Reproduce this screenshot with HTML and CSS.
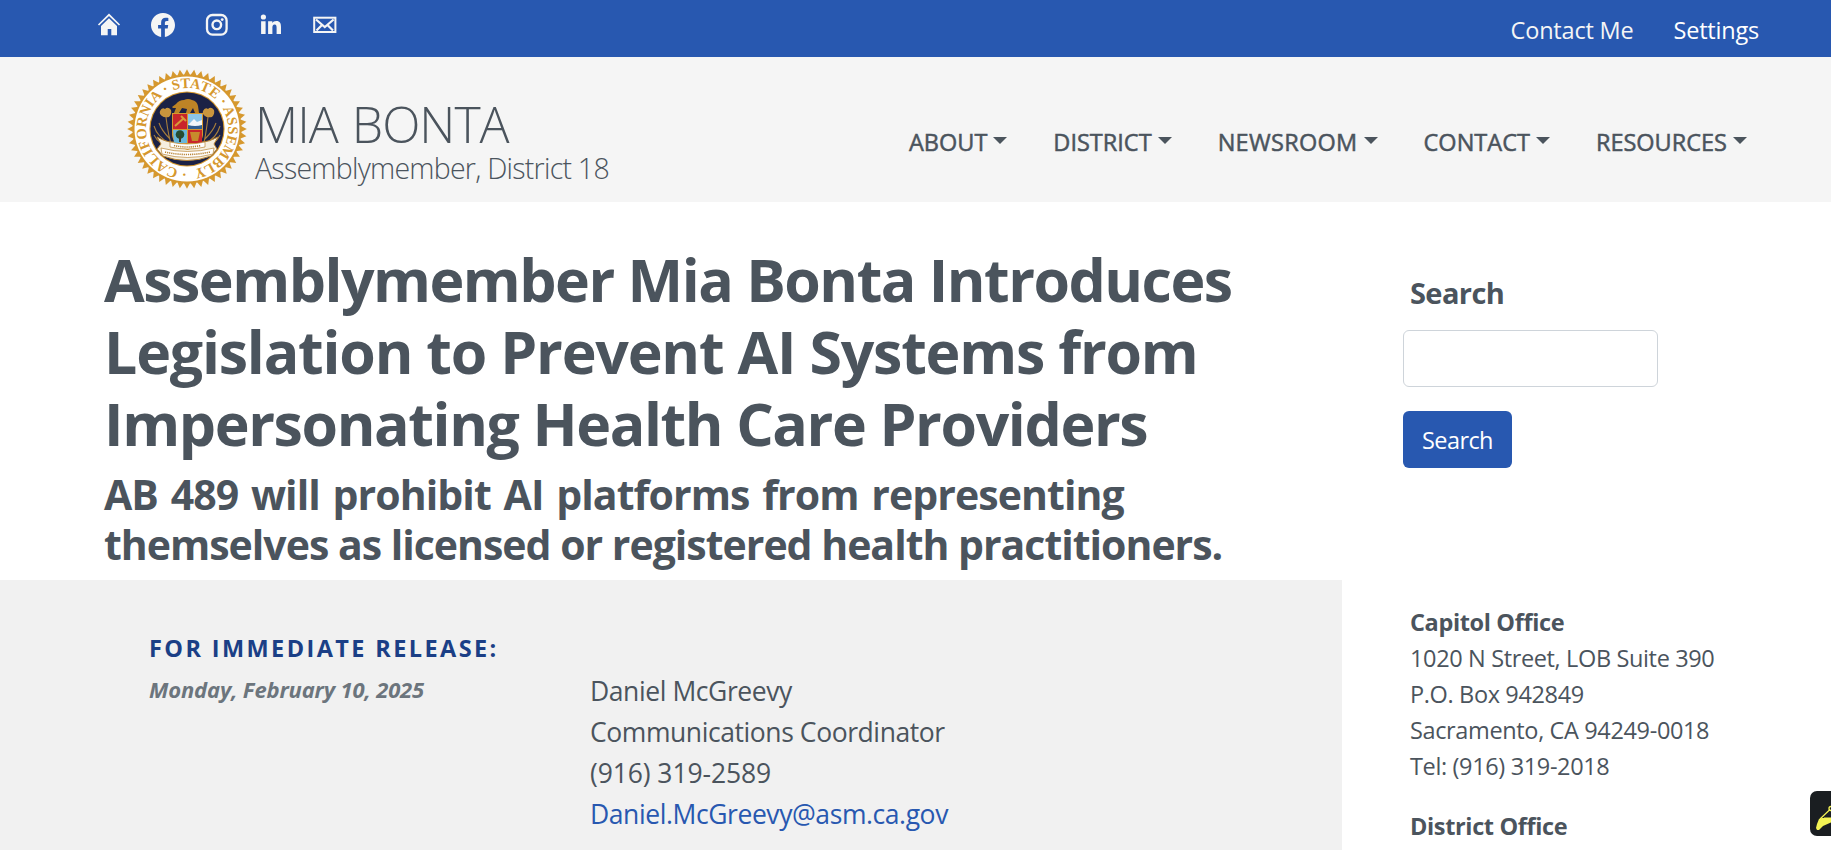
FILE: index.html
```
<!DOCTYPE html>
<html lang="en">
<head>
    <meta charset="UTF-8">
    <meta name="viewport" content="width=device-width, initial-scale=1.0">
    <title>Assemblymember Mia Bonta</title>
    <link rel="stylesheet" href="styles.css">
</head>
<body>
    <div class="topbar">
        <div class="social">
            <a href="#" aria-label="Home"><svg width="24" height="24" viewBox="0 0 24 24"><path d="M1.500 12 12 1.800 22.500 12" fill="none" stroke="#f5f5f5" stroke-width="1.700"/><path d="M4 13 12 5.300l8 7.700V22.300H14.300v-6.300h-3.600v6.300H4z" fill="#f5f5f5"/></svg></a>
            <a href="#" aria-label="Facebook"><svg width="24" height="24" viewBox="0 0 16 16" fill="#f5f5f5"><path d="M16 8.049c0-4.446-3.582-8.050-8-8.050C3.580 0-.002 3.603-.002 8.050c0 4.017 2.926 7.347 6.750 7.951v-5.625h-2.030V8.050H6.750V6.275c0-2.017 1.195-3.131 3.022-3.131.876 0 1.791.157 1.791.157v1.980h-1.009c-.993 0-1.303.621-1.303 1.258v1.510h2.218l-.354 2.326H9.250V16c3.824-.604 6.750-3.934 6.750-7.951"/></svg></a>
            <a href="#" aria-label="Instagram"><svg width="24" height="24" viewBox="0 0 24 24" fill="none" stroke="#f5f5f5"><rect x="2" y="2" width="19.600" height="19.600" rx="5.500" stroke-width="2.300"/><circle cx="11.800" cy="11.800" r="4.300" stroke-width="2.400"/><circle cx="17.200" cy="6.600" r="1.400" fill="#f5f5f5" stroke="none"/></svg></a>
            <a href="#" aria-label="LinkedIn"><svg width="24" height="24" viewBox="0 0 24 24" fill="#f5f5f5"><circle cx="4.400" cy="4" r="2.600"/><path d="M2.100 8.300h4.500V21H2.100zM9.100 8.300h4.200v1.800c.700-1.200 2-2.100 4-2.100 3.800 0 4.700 2.500 4.700 5.900V21h-4.400v-6.300c0-1.700-.2-3.200-2-3.200-1.800 0-2.200 1.400-2.200 3.100V21H9.100z"/></svg></a>
            <a href="#" aria-label="Email"><svg width="24" height="24" viewBox="0 0 24 24" fill="none" stroke="#f5f5f5"><rect x="1.200" y="4.700" width="21.200" height="14.300" stroke-width="2"/><path d="M3 6.500l8.800 7.500 8.800-7.500M3.500 17.500l5.500-5.500M20 17.500l-5.500-5.500" stroke-width="2.200"/></svg></a>
        </div>
        <div class="toplinks">
            <a href="#">Contact Me</a>
            <a href="#">Settings</a>
        </div>
    </div>

    <header class="header">
        <a href="#" class="brand">
            <svg class="seal" width="122" height="122" viewBox="-61 -61 122 122">
                <defs>
                    <path id="ring" d="M0 41A41 41 0 1 1 .1 41"/>
                </defs>
                <g id="teeth"></g>
                <circle r="54.500" fill="#d6982e"/>
                <circle r="52.500" fill="#fff"/>
                <circle r="37.600" fill="#d6982e"/>
                <circle r="36.500" fill="#1b2145"/>
                <text class="seal-text"><textPath href="#ring" startOffset="0" textLength="250">· CALIFORNIA · STATE · ASSEMBLY</textPath></text>
                <g fill="none" stroke="#a87f3c" stroke-width="1.100">
                    <path d="M-15 18C-19 6-20-4-21-12M-17 10C-24 3-27-3-28-6M-17 14C-25 11-31 4-33-3M-16 16C-24 17-30 12-33 6"/>
                    <path d="M16 18C19 6 20-4 21-12M18 10C25 3 28-3 29-6M18 14C26 11 31 4 33-3M17 16C25 17 30 12 33 6"/>
                </g>
                <path d="M-27-18q2-4 5-2 3-3 6 1 1 4-2 7-5 1-7-1-3-2-2-5zM16-18q2-4 5-2 3-3 6 1 1 4-2 7-5 1-7-1-3-2-2-5z" fill="#c9953d"/>
                <path d="M-15-22l4-3q3-4 8-4 4-2 8 0 5 1 6 6l1 7h-4l-2-5-3 5h-4l1-4-5-1-3 5h-5l2-5-3 0z" fill="#bd8326"/>
                <path d="M-30 8q9 5 15 5h30q7 0 16-5l-4 7 3 5-6 7q-24 9-48 0l-6-7 4-5z" fill="#f6efdf" stroke="#b98535"/>
                <path d="M-15-16H16V6Q15 16 .5 21-14 16-15 6z" fill="#d6982e"/>
                <path d="M-14-15H0V0H-14z" fill="#c9252b"/>
                <path d="M1-15H15V0H1z" fill="#8bc4e8"/>
                <path d="M-14 1H0V14H-13z" fill="#68b7dc"/>
                <path d="M1 1H15V14H1z" fill="#c9252b"/>
                <path d="M1-4l6-6 3 3 5-2V-3H1z" fill="#f3f7fa"/>
                <path d="M1-4q7 2 14 0V0H1z" fill="#315f91"/>
                <path d="M-12-3l9-8M-6-13l5 5" stroke="#d89c39" stroke-width="2"/>
                <circle cx="-7" cy="5.500" r="4.300" fill="#244c33"/>
                <path d="M-8 7h2v6h-2z" fill="#3b3b25"/>
                <path d="M3 3h10l-2 9H5z" fill="#c78b2c"/>
                <path d="M-17 13q17 4 35 0v5q-17 4-35 0z" fill="#fff" stroke="#b98535" stroke-width=".7"/>
                <path d="M-26 19q26 7 53 0l-1 6q-25 7-51 0z" fill="#fff" stroke="#b98535" stroke-width=".7"/>
                <path d="M-13 16.500q13 3 27 0M-22 23q22 5 45 0" fill="none" stroke="#b98535" stroke-width="1.600" stroke-dasharray="1.200 .9"/>
            </svg>
            <div class="brand-text">
                <div class="name">MIA BONTA</div>
                <div class="office">Assemblymember, District 18</div>
            </div>
        </a>
        <nav class="nav">
            <a href="#">ABOUT</a>
            <a href="#">DISTRICT</a>
            <a href="#" class="nav-newsroom">NEWSROOM</a>
            <a href="#">CONTACT</a>
            <a href="#">RESOURCES</a>
        </nav>
    </header>

    <div class="page">
        <main class="main">
            <div class="titles">
                <h1><span class="tight">Assemblymember Mia Bonta Introduces</span><br>Legislation to Prevent AI Systems from<br><span class="snug">Impersonating Health Care Providers</span></h1>
                <h2>AB 489 will prohibit AI platforms from representing<br><span class="tight">themselves as licensed or registered health practitioners.</span></h2>
            </div>
            <div class="release">
                <div class="release-info">
                    <div class="release-label">FOR IMMEDIATE RELEASE:</div>
                    <div class="release-date">Monday, February 10, 2025</div>
                </div>
                <div class="release-contact">
                    <div>Daniel McGreevy</div>
                    <div>Communications Coordinator</div>
                    <div class="phone">(916) 319-2589</div>
                    <div><a href="#">Daniel.McGreevy@asm.ca.gov</a></div>
                </div>
            </div>
        </main>
        <aside class="sidebar">
            <form class="search">
                <h3>Search</h3>
                <input type="text" aria-label="Search">
                <button type="button">Search</button>
            </form>
            <address>
                <strong>Capitol Office</strong>
                <div>1020 N Street, LOB Suite 390</div>
                <div>P.O. Box 942849</div>
                <div>Sacramento, CA 94249-0018</div>
                <div>Tel: (916) 319-2018</div>
            </address>
            <address>
                <strong>District Office</strong>
            </address>
        </aside>
    </div>

    <div class="highlighter">
        <svg width="45" height="45" viewBox="0 0 45 45"><path d="M6 37l1-4 2-5 3-1h14l-4 4-9 4-4 4H7z" fill="#f3f354"/><path d="M10 28 20 18.500M14 27h10" stroke="#f3f354" stroke-width="1.200"/><circle cx="21" cy="17.500" r="2" fill="none" stroke="#f3f354" stroke-width="1.300"/></svg>
    </div>

    <script>
        // gold points round the edge of the seal
        const teeth = document.getElementById('teeth');
        for (let i = 0; i < 52; i++) {
            const p = document.createElementNS('http://www.w3.org/2000/svg', 'path');
            p.setAttribute('d', 'M-3.6 -53L0 -59.800L3.600 -53z');
            p.setAttribute('fill', '#d6982e');
            p.setAttribute('transform', 'rotate(' + i * 360 / 52 + ')');
            teeth.appendChild(p);
        }
    </script>
</body>
</html>
```

FILE: styles.css
```
* {
    box-sizing: border-box;
}
body {
    margin: 0;
    height: 850px;
    overflow: hidden;
    font-family: "Open Sans", "Noto Sans", sans-serif;
    font-size: 23.5px;
    line-height: 36px;
    color: #4b545d;
    background-color: #fff;
}
a {
    color: inherit;
    text-decoration: none;
}
h1, h2, h3 {
    margin: 0;
    font-weight: 700;
}
.topbar {
    display: flex;
    justify-content: space-between;
    height: 57px;
    padding: 12px 72px 0 97px;
    background-color: #2858b0;
    color: #f5f5f5;
}
.social {
    display: flex;
    gap: 30px;
    padding-top: 1px;
}
.social svg {
    display: block;
}
.toplinks {
    display: flex;
    gap: 40px;
    letter-spacing: -0.2px;
}
.toplinks a:last-child {
    color: #fff;
}
.header {
    display: flex;
    justify-content: space-between;
    height: 145px;
    padding: 7px 84px 0 126px;
    background-color: #f5f5f5;
}
.brand {
    display: flex;
}
.seal {
    margin-top: 4px;
}
.seal-text {
    font-family: "Liberation Serif", serif;
    font-size: 14.5px;
    font-weight: 700;
    fill: #d6982e;
}
.brand-text {
    padding: 34px 0 0 7px;
    font-weight: 300;
    white-space: nowrap;
}
.name {
    font-size: 50px;
    line-height: 52px;
    letter-spacing: -1px;
    word-spacing: 2px;
}
.office {
    font-size: 28.5px;
    line-height: 36px;
    letter-spacing: -0.75px;
}
.nav {
    display: flex;
    gap: 46px;
    padding-top: 60px;
    font-weight: 500;
    -webkit-text-stroke: 0.5px #4b545d;
    white-space: nowrap;
}
.nav a::after {
    content: "";
    display: inline-block;
    margin-left: 6px;
    vertical-align: 7px;
    border-top: 7px solid;
    border-right: 7px solid transparent;
    border-left: 7px solid transparent;
}
.nav-newsroom {
    letter-spacing: 0.3px;
}
.page {
    display: flex;
    height: 648px;
}
.main {
    display: flex;
    flex-direction: column;
    width: 1342px;
}
.titles {
    height: 378px;
    padding: 41px 0 0 104px;
    white-space: nowrap;
}
h1 {
    font-size: 59px;
    line-height: 72px;
    letter-spacing: -1.2px;
}
h1 .tight {
    letter-spacing: -1.5px;
}
h1 .snug {
    letter-spacing: -1.38px;
}
h2 {
    font-size: 41px;
    line-height: 50px;
    margin-top: 10px;
    letter-spacing: -0.93px;
    word-spacing: 3px;
}
h2 .tight {
    letter-spacing: -1px;
    word-spacing: 0;
}
.release {
    display: flex;
    flex: 1;
    padding: 50px 0 0 149px;
    background-color: #f1f1f1;
}
.release-info {
    width: 441px;
}
.release-label {
    font-weight: 700;
    letter-spacing: 2.4px;
    color: #1b3f86;
}
.release-date {
    margin-top: 5px;
    font-size: 22px;
    font-weight: 700;
    font-style: italic;
    letter-spacing: -0.15px;
    color: #6c757d;
}
.release-contact {
    padding-top: 41px;
    font-size: 26.5px;
    line-height: 41px;
    letter-spacing: -0.42px;
}
.release-contact .phone {
    letter-spacing: -0.1px;
}
.release-contact a {
    color: #2858b0;
}
.sidebar {
    padding: 73px 0 0 61px;
}
.search {
    display: flex;
    flex-direction: column;
    align-items: flex-start;
    height: 329px;
}
.search h3 {
    margin: 0 0 19px 7px;
    font-size: 29px;
    line-height: 36px;
    letter-spacing: -0.6px;
}
.search input {
    width: 255px;
    height: 57px;
    border: 1px solid #ced4da;
    border-radius: 6px;
}
.search button {
    width: 109px;
    height: 57px;
    margin-top: 24px;
    padding: 0;
    border: 0;
    border-radius: 6px;
    background-color: #2858b0;
    color: #fff;
    font: inherit;
    letter-spacing: -0.6px;
}
address {
    margin: 0 0 24px 7px;
    font-style: normal;
    letter-spacing: -0.36px;
    white-space: nowrap;
}
.highlighter {
    position: fixed;
    top: 791px;
    left: 1810px;
    width: 45px;
    height: 45px;
    border-radius: 7px;
    background-color: #1a1e21;
}
```
